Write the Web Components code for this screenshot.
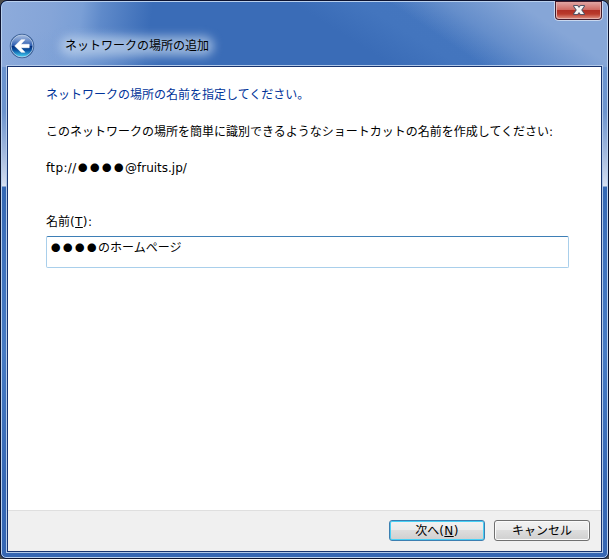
<!DOCTYPE html>
<html lang="ja">
<head>
<meta charset="utf-8">
<title>ネットワークの場所の追加</title>
<style>
html, body { margin: 0; width: 609px; height: 559px; overflow: hidden; background: #4a4a48; }
body { font: 12px/18px "DejaVu Sans", "Noto Sans CJK JP", sans-serif; color: #000; }
.scheme { display: inline-block; width: 31px; letter-spacing: .35px; }
.key { letter-spacing: .4px; }
u { text-decoration: underline; text-underline-offset: 1px; text-decoration-thickness: 1px; }
</style>
</head>
<body>
<aero-window>
  <close-button slot="controls"></close-button>
  <back-button slot="nav"></back-button>
  <glow-title slot="nav">ネットワークの場所の追加</glow-title>
  <wizard-page>
    <wizard-line kind="heading">ネットワークの場所の名前を指定してください。</wizard-line>
    <wizard-line kind="intro">このネットワークの場所を簡単に識別できるようなショートカットの名前を作成してください:</wizard-line>
    <wizard-line><span class="scheme">ftp://</span><dot-mask count="4"></dot-mask><span>@fruits.jp/</span></wizard-line>
    <wizard-field><span slot="label">名前<span class="key">(<u>T</u>):</span></span><dot-mask count="4"></dot-mask>のホームページ</wizard-field>
  </wizard-page>
  <aero-button slot="footer" default>次へ<span class="key">(<u>N</u>)</span></aero-button>
  <aero-button slot="footer">キャンセル</aero-button>
</aero-window>
<script>
function define(name, html) {
  const template = document.createElement('template');
  template.innerHTML = html;
  customElements.define(name, class extends HTMLElement {
    constructor() {
      super();
      this.attachShadow({ mode: 'open' }).append(template.content.cloneNode(true));
    }
  });
}

define('aero-window', `
<style>
:host { display: block; box-sizing: border-box; width: 609px; height: 559px; border: 1px solid #0c1330; border-radius: 7px 7px 6px 6px; background: #3a6cb7; overflow: hidden; }
.glass { box-sizing: border-box; height: 557px; padding: 0 4px 4px; border: 1px solid #b9d0ee; border-radius: 6px 6px 5px 5px; display: flex; flex-direction: column;
  background:
    radial-gradient(ellipse 80px 34px at 80px 58px, #7ba0d6a0, #7ba0d600) 0 0/605px 65px no-repeat,
    linear-gradient(98deg, #8dabdb 0, #85a5d8 50px, #7a9fd6 80px, #5f8aca 100px, #3a6cb700 150px) 0 0/605px 65px no-repeat,
    linear-gradient(34deg, #86a6d700 270px, #86a6d780 300px, #86a6d7 342px) 0 0/605px 65px no-repeat,
    linear-gradient(32deg, #3a6cb7 208px, #4375be 244px, #4678c0) 0 0/605px 65px no-repeat,
    linear-gradient(#6a93cf 64px, #6d94ce 110px, #a2b8de 150px, #d0daee 181px, #dde4f1 184px, #3467b3 185px, #3e71bc 240px, #477bc4 350px, #3668b5 480px, #3566b3); }
.bar { height: 63px; flex: none; position: relative; display: flex; align-items: center; padding: 24px 0 0 3px; box-sizing: border-box; }
.controls { position: absolute; right: 0; top: -1px; }
.client { flex: 1; display: flex; flex-direction: column; border: 1px solid #b2c9e9; min-height: 0; }
.inner { flex: 1; display: flex; flex-direction: column; border: 1px solid #17336f; background: #fff; min-height: 0; }
.body { flex: 1; min-height: 0; }
.footer { height: 41px; flex: none; box-sizing: border-box; border-top: 1px solid #dfdfdf; background: #f0f0f0; display: flex; justify-content: flex-end; gap: 9px; padding: 9px 11px 0 0; }
</style>
<div class="glass">
  <div class="bar"><slot name="nav"></slot><div class="controls"><slot name="controls"></slot></div></div>
  <div class="client"><div class="inner"><div class="body"><slot></slot></div><div class="footer"><slot name="footer"></slot></div></div></div>
</div>`);

define('close-button', `
<style>:host { display: block; width: 49px; height: 20px; } svg { display: block; }</style>
<svg width="49" height="20" viewBox="0 0 49 20">
  <defs>
    <linearGradient id="r" x1="0" y1="0" x2="0" y2="1">
      <stop offset="0" stop-color="#e0a5a4"/><stop offset=".48" stop-color="#cf6a63"/>
      <stop offset=".5" stop-color="#b02f26"/><stop offset=".75" stop-color="#b93a2c"/><stop offset="1" stop-color="#d98273"/>
    </linearGradient>
  </defs>
  <path d="M.5 0V15.5Q.5 19.5 4.500 19.5H44.500Q48.500 19.500 48.500 15.500V0" fill="#e6d9e2" stroke="#c9d8ef"/>
  <path d="M1 0H48V15Q48 19 44 19H5Q1 19 1 15Z" fill="#431b2b"/>
  <path d="M2 1H47V15Q47 18 44 18H5Q2 18 2 15Z" fill="#e5b1ad"/>
  <path d="M3 1H46V14.500Q46 17 43.500 17H5.500Q3 17 3 14.500Z" fill="url(#r)"/>
  <path d="M20 5H23.500L25 6.900L26.500 5H30L27.200 9L30 13H26.500L25 11.100L23.500 13H20L22.800 9Z" fill="#f6f6f6" stroke="#535467" stroke-width="2" stroke-linejoin="round" paint-order="stroke"/>
</svg>`);

define('back-button', `
<style>:host { display: block; width: 26px; height: 26px; margin-top: 1px; } svg { display: block; }</style>
<svg width="26" height="26" viewBox="0 0 26 26">
  <defs>
    <linearGradient id="b" x1="0" y1="0" x2="0" y2="1">
      <stop offset="0" stop-color="#a6bce0"/><stop offset=".25" stop-color="#6d90cb"/><stop offset=".48" stop-color="#2c5cae"/>
      <stop offset=".51" stop-color="#05307f"/><stop offset=".7" stop-color="#0c57a5"/><stop offset="1" stop-color="#48d5f7"/>
    </linearGradient>
  </defs>
  <circle cx="13" cy="13" r="12" fill="#31568e" stroke="#31568e" stroke-width=".4"/>
  <circle cx="13" cy="13" r="11" fill="url(#b)" stroke="#c1d5ed" stroke-width=".8"/>
  <path d="M5.700 13L12.200 6.700H15.900L11.800 11.300H20.200V14.700H11.800L15.900 19.300H12.200Z" fill="#fff" stroke="#fff" stroke-width=".6" stroke-linejoin="round"/>
</svg>`);

define('glow-title', `
<style>
:host { display: block; margin-left: 30px; line-height: 18px; white-space: nowrap; position: relative; color: #000; }
i { position: absolute; inset: -1px -5px; border-radius: 10px; background: #c5d7efa8; filter: blur(5px); }
span { position: relative; }
</style><i></i><span><slot></slot></span>`);

define('wizard-page', `
<style>:host { display: flex; flex-direction: column; align-items: stretch; padding: 19px 32px 0 38px; }</style>
<slot></slot>`);

define('wizard-line', `
<style>
:host { display: block; height: 18px; line-height: 18px; margin-bottom: 19px; white-space: nowrap; }
:host([kind=heading]) { color: #003399; }
:host([kind=intro]) { margin-bottom: 18px; }
</style><slot></slot>`);

customElements.define('dot-mask', class extends HTMLElement {
  constructor() {
    super();
    const n = Number(this.getAttribute('count')) || 4;
    this.attachShadow({ mode: 'open' }).innerHTML = `
      <style>:host { display: inline-block; width: 48px; box-sizing: border-box; padding-left: 1px; font: 9.5px/12px "Noto Sans CJK JP", sans-serif; letter-spacing: 2.5px; white-space: nowrap; vertical-align: 1px; }</style>${'●'.repeat(n)}`;
  }
});

define('wizard-field', `
<style>
:host { display: block; padding-top: 17px; }
.label { height: 18px; line-height: 18px; }
.box { box-sizing: border-box; height: 32px; margin-top: 5px; padding: 2px 3px; border: 1px solid #a9cfeb; border-top-color: #3e7fb6; border-radius: 2px; background: #fff; line-height: 18px; white-space: nowrap; }
</style>
<div class="label"><slot name="label"></slot></div>
<div class="box"><slot></slot></div>`);

define('aero-button', `
<style>
:host { display: block; box-sizing: border-box; width: 96px; height: 21px; border: 1px solid #707070; border-radius: 3px; text-align: center; line-height: 20px; box-shadow: inset 0 0 0 1px #fbfbfb; background: linear-gradient(#f2f2f2, #ebebeb 50%, #dddddd 50%, #cfcfcf); white-space: nowrap; }
:host([default]) { border-color: #3c7fb1; box-shadow: inset 0 0 0 1px #48d0f5; }
</style><slot></slot>`);
</script>
</body>
</html>
